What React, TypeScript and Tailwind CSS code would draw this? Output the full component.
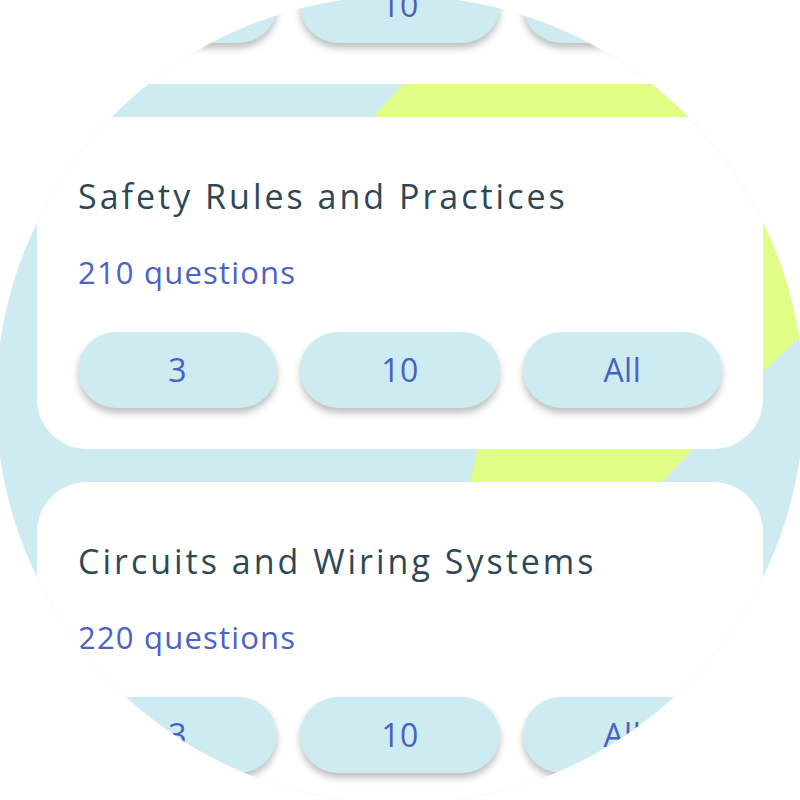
import React from "react";

type Topic = { title: string; count: number };

const topics: Topic[] = [
  { title: "Electrical Theory Basics", count: 200 },
  { title: "Safety Rules and Practices", count: 210 },
  { title: "Circuits and Wiring Systems", count: 220 },
];

function Pill({ label }: { label: string }) {
  return (
    <button className="h-[76px] rounded-full bg-[#ceebf1] shadow-[0_5px_7px_rgba(0,0,0,0.25)] flex items-center justify-center text-[32px] leading-none tracking-[0.5px] text-[#4a5fc4] font-['Open_Sans',sans-serif]">
      {label}
    </button>
  );
}

function Card({ topic }: { topic: Topic }) {
  return (
    <div className="h-[332px] rounded-[50px] bg-white px-[41px] pt-[62px] pb-[41px] flex flex-col">
      <h2 className="text-[34px] leading-[34px] font-medium tracking-[3px] text-[#2e4756] font-['Open_Sans',sans-serif] whitespace-nowrap">
        {topic.title}
      </h2>
      <p className="mt-[44px] text-[31px] leading-[30px] tracking-[1.2px] text-[#4b62c6] font-['Open_Sans',sans-serif] whitespace-nowrap">
        {topic.count} questions
      </p>
      <div className="mt-[45px] grid grid-cols-3 gap-[23px]">
        <Pill label="3" />
        <Pill label="10" />
        <Pill label="All" />
      </div>
    </div>
  );
}

export default function App() {
  return (
    <div className="w-[800px] h-[800px] bg-white overflow-hidden">
      <div className="relative w-[800px] h-[800px] bg-[#ceebf1] overflow-hidden [clip-path:circle(404px_at_400px_400px)]">
        <svg
          className="absolute inset-0"
          width="800"
          height="800"
          viewBox="0 0 800 800"
        >
          <path
            d="M 440 40 L 403 84 L 373 117 L 360 200 L 470 420 L 478 449 L 470 482 L 466 520 L 626 520 L 662 482 L 693 449 L 762 373 L 800 337 L 800 40 Z"
            fill="#e0fd86"
          />
        </svg>
        <div className="relative -mt-[248px] px-[37px] flex flex-col gap-[33px]">
          {topics.map((t) => (
            <Card key={t.title} topic={t} />
          ))}
        </div>
      </div>
    </div>
  );
}
